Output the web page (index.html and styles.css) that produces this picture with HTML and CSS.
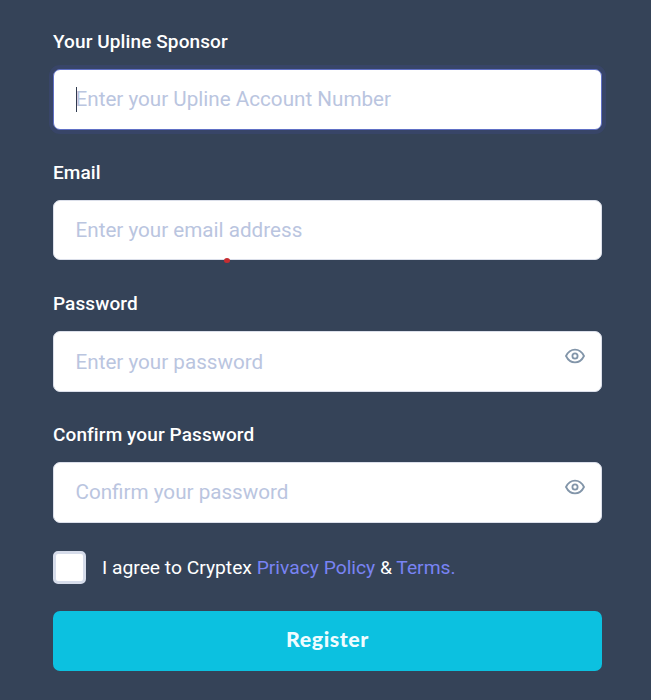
FILE: index.html
```html
<!DOCTYPE html>
<html lang="en">

<head>
    <meta charset="UTF-8">
    <meta name="viewport" content="width=device-width, initial-scale=1.0">
    <title>Register</title>
    <link rel="stylesheet" href="styles.css">
</head>

<body>

    <form class="register-form">
        <div class="form-group">
            <label for="sponsor">Your Upline Sponsor</label>
            <div class="field">
                <input type="text" id="sponsor" class="active" placeholder="Enter your Upline Account Number">
                <span class="caret"></span>
            </div>
        </div>

        <div class="form-group">
            <label for="email">Email</label>
            <div class="field">
                <input type="email" id="email" placeholder="Enter your email address">
                <span class="marker"></span>
            </div>
        </div>

        <div class="form-group">
            <label for="password">Password</label>
            <div class="field">
                <input type="password" id="password" placeholder="Enter your password">
                <svg class="eye" viewBox="0 0 20 16" onclick="togglePassword('password')">
                    <path d="M1 8C3.2 3.6 6.2 1.6 10 1.6S16.8 3.6 19 8C16.8 12.4 13.8 14.4 10 14.4S3.2 12.4 1 8Z" />
                    <circle cx="10" cy="8" r="2.6" />
                </svg>
            </div>
        </div>

        <div class="form-group">
            <label for="confirm">Confirm your Password</label>
            <div class="field">
                <input type="password" id="confirm" placeholder="Confirm your password">
                <svg class="eye" viewBox="0 0 20 16" onclick="togglePassword('confirm')">
                    <path d="M1 8C3.2 3.6 6.2 1.6 10 1.6S16.8 3.6 19 8C16.8 12.4 13.8 14.4 10 14.4S3.2 12.4 1 8Z" />
                    <circle cx="10" cy="8" r="2.6" />
                </svg>
            </div>
        </div>

        <div class="agree">
            <input type="checkbox" id="agree">
            <label for="agree">I agree to Cryptex <a href="#">Privacy Policy</a> &amp; <a href="#">Terms.</a></label>
        </div>

        <button type="submit">Register</button>
    </form>

    <script>
        function togglePassword(id) {
            const input = document.getElementById(id);
            input.type = input.type === 'password' ? 'text' : 'password';
        }
    </script>
</body>

</html>
```
FILE: styles.css
```css
* {
    box-sizing: border-box;
}

body {
    margin: 0;
    padding: 27px 49px 0 53px;
    background-color: #354358;
    color: #fff;
    font-family: Roboto, sans-serif;
}

.form-group {
    height: 131px;
}

.form-group label {
    display: block;
    height: 42px;
    line-height: 29px;
    font-size: 19px;
    font-weight: 500;
    letter-spacing: 0.1px;
}

.field {
    position: relative;
}

.field input {
    display: block;
    width: 100%;
    height: 60px;
    padding: 0 22px 1px 21.5px;
    border: 1px solid #dbdfea;
    border-radius: 7px;
    background-color: #fff;
    color: #364359;
    font-family: Roboto, sans-serif;
    font-size: 20.65px;
    outline: none;
}

.field input::placeholder {
    color: #bac5df;
    opacity: 1;
}

.field input.active {
    height: 61px;
    padding-bottom: 2px;
    border-color: #6070c5;
    box-shadow: 0 0 0 4px #3a477590;
}

#password,
#confirm {
    height: 61px;
    padding-bottom: 0;
}

#confirm {
    padding-bottom: 2px;
}

.caret {
    position: absolute;
    left: 23px;
    top: 18px;
    width: 1px;
    height: 25px;
    background-color: #303b50;
}

.marker {
    position: absolute;
    left: 171px;
    bottom: -3px;
    width: 6px;
    height: 5px;
    border-radius: 50%;
    background-color: #c62d31;
}

.eye {
    position: absolute;
    right: 17px;
    top: 17px;
    width: 20px;
    height: 16px;
    fill: none;
    stroke: #8295a9;
    stroke-width: 1.8;
    cursor: pointer;
}

.agree {
    display: flex;
    align-items: center;
    height: 33px;
    margin-bottom: 27px;
    font-size: 19.25px;
}

.agree input {
    appearance: none;
    width: 33px;
    height: 33px;
    margin: 0 16px 0 0;
    border: 3px solid #d6dcea;
    border-radius: 5px;
    background-color: #fff;
}

.agree a {
    color: #7983f4;
    text-decoration: none;
}

button {
    display: block;
    width: 100%;
    height: 60px;
    padding: 0 0 4px;
    border: none;
    border-radius: 7px;
    background-color: #0cc1e0;
    color: #effcff;
    font-family: Lato, sans-serif;
    font-size: 21.3px;
    font-weight: 900;
    letter-spacing: 0.6px;
    cursor: pointer;
}
```
